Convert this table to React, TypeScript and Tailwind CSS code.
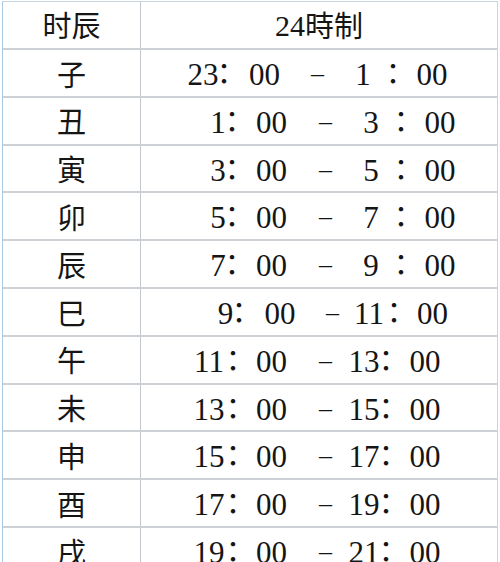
const LAYOUT: Record<string, string[]> = {
  a: ["ml-[62px]", "ml-[21px]", "ml-[40.5px]", "ml-[53px]", "ml-[45.5px]", "ml-[30px]", "ml-[39px]"],
  b: ["ml-[77px]", "ml-[14px]", "ml-[39.5px]", "ml-[54px]", "ml-[45.5px]", "ml-[30px]", "ml-[39px]"],
  c: ["ml-[84.5px]", "ml-[13.5px]", "ml-[41px]", "ml-[52.5px]", "ml-[36.5px]", "ml-[25px]", "ml-[38.5px]"],
  d: ["ml-[68px]", "ml-[24px]", "ml-[38.5px]", "ml-[54px]", "ml-[38.5px]", "ml-[22px]", "ml-[39px]"],
};

const ROWS = [
  { name: "子", from: "23", to: "1", layout: "a" },
  { name: "丑", from: "1", to: "3", layout: "b" },
  { name: "寅", from: "3", to: "5", layout: "b" },
  { name: "卯", from: "5", to: "7", layout: "b" },
  { name: "辰", from: "7", to: "9", layout: "b" },
  { name: "巳", from: "9", to: "11", layout: "c" },
  { name: "午", from: "11", to: "13", layout: "d" },
  { name: "未", from: "13", to: "15", layout: "d" },
  { name: "申", from: "15", to: "17", layout: "d" },
  { name: "酉", from: "17", to: "19", layout: "d" },
  { name: "戌", from: "19", to: "21", layout: "d" },
  { name: "亥", from: "21", to: "23", layout: "d" },
];

function Seg({ text, cls }: { text: string; cls: string }) {
  let inner = <span>{text}</span>;
  if (text === "：") {
    inner = (
      <span className="font-['Noto_Sans_CJK_TC',sans-serif] text-[29px] [font-feature-settings:'halt']">{text}</span>
    );
  } else if (text === "–") {
    inner = <span className="inline-block -translate-y-[3px] text-[26px]">{text}</span>;
  }
  return <span className={`flex w-0 shrink-0 justify-center whitespace-nowrap ${cls}`}>{inner}</span>;
}

export default function App() {
  return (
    <div className="min-h-screen w-[500px] bg-white pl-[2px] pt-[1px] font-['Liberation_Serif','Noto_Sans_CJK_SC',serif] text-[#151515]">
      <div className="w-[496px] border-t border-r border-l border-t-[#c5d5e2] border-r-[#c8d4de] border-l-[#a9cbe3]">
        {/* header */}
        <div className="flex h-[48px] border-b-2 border-[#cdd1d5]">
          <div className="flex w-[138px] items-center justify-center border-r border-[#c4c8cc] font-['Noto_Sans_CJK_SC',sans-serif] text-[29px]">
            时辰
          </div>
          <div className="flex flex-1 items-center justify-center text-[30px]">
            <span className="font-['Liberation_Serif',serif]">24</span>
            <span className="font-['Noto_Sans_CJK_TC',sans-serif] text-[29px]">時制</span>
          </div>
        </div>

        {ROWS.map((row) => {
          const cls = LAYOUT[row.layout];
          const segs = [row.from, "：", "00", "–", row.to, "：", "00"];
          return (
            <div key={row.name} className="flex h-[47.8px] border-b-2 border-[#cdd1d5]">
              <div className="flex w-[138px] items-center justify-center border-r border-[#c4c8cc] pt-[1px] font-['Noto_Sans_CJK_SC',sans-serif] text-[29px]">
                {row.name}
              </div>
              <div className="flex flex-1 items-baseline pt-[8px] text-[31px] leading-none">
                {segs.map((s, i) => (
                  <Seg key={i} text={s} cls={cls[i]} />
                ))}
              </div>
            </div>
          );
        })}
      </div>
    </div>
  );
}
